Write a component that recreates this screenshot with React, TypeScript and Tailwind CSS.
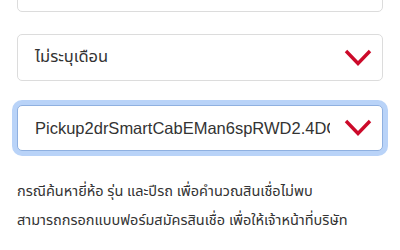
import React from "react";

const Chevron = () => (
  <svg width="28" height="18" viewBox="0 0 28 18" fill="none" className="shrink-0">
    <path d="M2 2 L14 14.5 L26 2" stroke="#cc0a2a" strokeWidth="3.4" strokeLinecap="butt" strokeLinejoin="miter" />
  </svg>
);

export default function App() {
  return (
    <div className="w-[400px] h-[250px] overflow-hidden bg-white font-['Noto_Sans_Thai','Liberation_Sans',sans-serif]">
      <div className="px-[17px]">
        {/* select row above, scrolled off */}
        <div className="-mt-[34px] h-[46px] rounded-[5px] border border-[#dcdcdc] bg-white" />

        <div className="mt-[22px] h-[47px] rounded-[5px] border border-[#dcdcdc] bg-white flex items-center pl-[17px] pr-[10px] justify-between">
          <span className="text-[16.5px] text-[#333]">ไม่ระบุเดือน</span>
          <Chevron />
        </div>

        <div className="mt-[24px] h-[46px] rounded-[5px] border border-[#8fb0e0] bg-white flex items-center pl-[17px] pr-[10px] gap-[14px] shadow-[0_0_0_5px_#b9d3f8]">
          <span className="font-['Liberation_Sans',sans-serif] text-[16.5px] text-[#333] whitespace-nowrap overflow-hidden flex-1">Pickup2drSmartCabEMan6spRWD2.4DCA</span>
          <Chevron />
        </div>

        <div className="mt-[27px] text-[14.5px] leading-[28.5px] text-[#333] whitespace-nowrap">
          <p>กรณีค้นหายี่ห้อ รุ่น และปีรถ เพื่อคำนวณสินเชื่อไม่พบ</p>
          <p>สามารถกรอกแบบฟอร์มสมัครสินเชื่อ เพื่อให้เจ้าหน้าที่บริษัท</p>
          <p className="mt-[9px]">ติดต่อกลับ</p>
        </div>
      </div>
    </div>
  );
}
